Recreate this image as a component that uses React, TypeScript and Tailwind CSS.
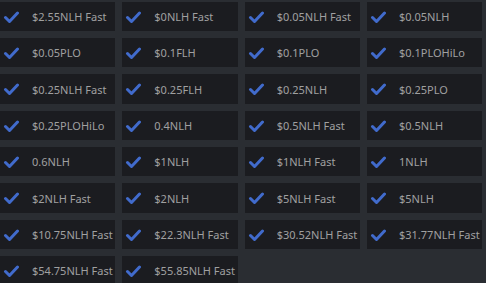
import React from "react";

const items = [
  "$2.55NLH Fast", "$0NLH Fast", "$0.05NLH Fast", "$0.05NLH",
  "$0.05PLO", "$0.1FLH", "$0.1PLO", "$0.1PLOHiLo",
  "$0.25NLH Fast", "$0.25FLH", "$0.25NLH", "$0.25PLO",
  "$0.25PLOHiLo", "0.4NLH", "$0.5NLH Fast", "$0.5NLH",
  "0.6NLH", "$1NLH", "$1NLH Fast", "1NLH",
  "$2NLH Fast", "$2NLH", "$5NLH Fast", "$5NLH",
  "$10.75NLH Fast", "$22.3NLH Fast", "$30.52NLH Fast", "$31.77NLH Fast",
  "$54.75NLH Fast", "$55.85NLH Fast",
];

function Check() {
  return (
    <svg width="17" height="13" viewBox="0 0 17 13" className="shrink-0">
      <path d="M2.5 6.5 L6.5 10.5 L14.5 2" fill="none" stroke="#416bcc" strokeWidth="3" strokeLinecap="round" strokeLinejoin="round" />
    </svg>
  );
}

export default function App() {
  return (
    <div className="w-[486px] h-[283px] overflow-hidden bg-[#2a2d32]" style={{ fontFamily: '"Noto Sans", "Open Sans", sans-serif' }}>
      <div className="grid grid-cols-[repeat(4,115.33px)] auto-rows-[29.33px] gap-[7px] pt-[1.67px]">
        {items.map((t) => (
          <div key={t} className="flex items-center bg-[#1b1c20] pl-[3px] pt-[2px]">
            <Check />
            <span className="ml-[12px] text-[11px] text-[#a0a0a0] whitespace-nowrap">{t}</span>
          </div>
        ))}
      </div>
    </div>
  );
}
